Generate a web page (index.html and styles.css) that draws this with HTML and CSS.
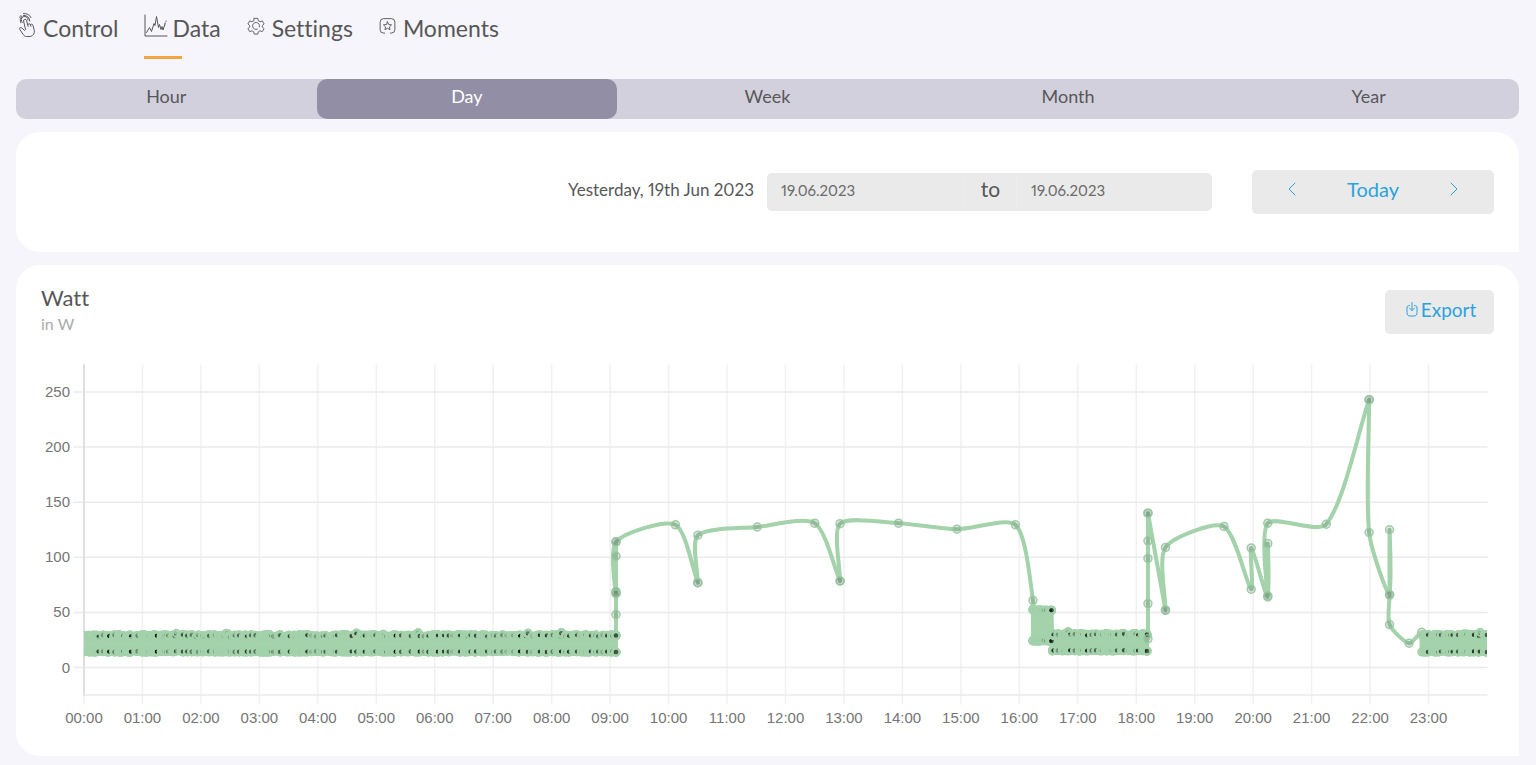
FILE: index.html
```html
<!DOCTYPE html>
<html lang="en">
<head>
  <meta charset="UTF-8" />
  <meta name="viewport" content="width=device-width, initial-scale=1.0"/>
  <title>Data</title>
  <link rel="stylesheet" href="styles.css">
</head>
<body>
  <nav class="nav">
    <a href="#control" class="nav-link">
      <svg class="icon icon-hand" viewBox="0 0 18 26">
        <path d="M7.500 17.500L5.600 9a1.500 1.500 0 0 1 2.900-.7l1.600 6M9.800 12.800c.4-1.700 2.300-1.400 2.700 0l.4 1.600M12.300 12.800c.8-1.200 2.300-.8 2.600.5l1.400 5c.6 3-1 5.500-4 6.200H8.500c-1.500 0-2.500-.8-3.500-2.300L1.800 17.500c-.8-1.700 1-2.600 2.200-1.400l2.500 2.400"/>
        <path d="M4.500 10.500a3.400 3.400 0 1 1 5.500-2.500M2.800 10.800a5.500 5.500 0 0 1 1-6.500M5.500 3.400a5.500 5.500 0 0 1 6.300 5.800M1.800 5.500a7 7 0 0 1 1-2M5.500 1.600a7.500 7.500 0 0 1 7.500 4"/>
      </svg>
      <span>Control</span>
    </a>
    <a href="#data" class="nav-link active">
      <svg class="icon icon-chart" viewBox="0 0 24 24">
        <path d="M1 1v21h22M2.500 18.500l3-5 2 4 2.500-8 1 2 1.500-9 2 11 1-3 1.500 5 1-3 1 3.500 2-6M21 9v1M22 7v.5"/>
      </svg>
      <span>Data</span>
    </a>
    <a href="#settings" class="nav-link">
      <svg class="icon icon-gear" viewBox="0 0 20 20">
        <path d="M8 1.500h4l.5 2.600 2 1.200 2.500-1 2 3.400-2 1.700v1.800l2 1.700-2 3.400-2.500-1-2 1.200-.5 2.500H8l-.5-2.500-2-1.200-2.500 1-2-3.400 2-1.700V9.400L1 7.700l2-3.400 2.500 1 2-1.200z"/>
        <path d="M11.500 13.600a3.900 3.900 0 1 1 2.300-2.400"/>
      </svg>
      <span>Settings</span>
    </a>
    <a href="#moments" class="nav-link">
      <svg class="icon icon-star" viewBox="0 0 18 18">
        <path d="M6 16.500H5A3.700 3.700 0 0 1 1.200 13V5A3.700 3.700 0 0 1 5 1.200h8A3.700 3.700 0 0 1 16.800 5v8a3.700 3.700 0 0 1-3.800 3.500h-1"/>
        <path d="M9 4.600l1.300 2.800 3 .4-2.200 2.100.6 3L9 11.400l-2.700 1.500.6-3-2.200-2.100 3-.4z"/>
      </svg>
      <span>Moments</span>
    </a>
  </nav>

  <main>
    <div class="tabs">
      <button class="tab">Hour</button>
      <button class="tab selected">Day</button>
      <button class="tab">Week</button>
      <button class="tab">Month</button>
      <button class="tab">Year</button>
    </div>

    <section class="card filter">
      <label class="range-label" for="from">Yesterday, 19th Jun 2023</label>
      <div class="range">
        <input class="date" id="from" type="text" value="19.06.2023">
        <label class="to" for="until">to</label>
        <input class="date" id="until" type="text" value="19.06.2023">
      </div>
      <div class="stepper">
        <button class="step" aria-label="Previous day">
          <svg class="chevron" viewBox="0 0 8 14"><path d="M7 1L1 7l6 6"/></svg>
        </button>
        <button class="today">Today</button>
        <button class="step" aria-label="Next day">
          <svg class="chevron" viewBox="0 0 8 14"><path d="M1 1l6 6-6 6"/></svg>
        </button>
      </div>
    </section>

    <section class="card panel">
      <div class="panel-head">
        <div>
          <h1>Watt</h1>
          <p class="unit">in W</p>
        </div>
        <button class="export">
          <svg class="icon-export" viewBox="0 0 12 15">
            <path d="M3.500 3.500C1.500 3.500 1 4.500 1 6v4.500C1 13 2 14 4 14h4c2 0 3-1 3-3.500V6c0-1.500-.5-2.500-2.500-2.500M6 .5v8M3.500 6L6 8.500 8.500 6"/>
          </svg>
          <span>Export</span>
        </button>
      </div>
      <svg class="chart" id="chart" viewBox="0 0 1453 371" role="img" aria-label="Watt per time of day">
        <defs>
          <clipPath id="area"><rect x="43" y="0" width="1403" height="340"/></clipPath>
        </defs>
        <g id="grid"></g>
        <g id="series" clip-path="url(#area)"></g>
      </svg>
    </section>
  </main>

  <script src="script.js"></script>
</body>
</html>
```
FILE: styles.css
```css
* {
  box-sizing: border-box;
}

body {
  margin: 0;
  background: #f6f5fb;
  color: #575757;
  font-family: Lato, sans-serif;
  font-variant-ligatures: none;
  font-variant-numeric: proportional-nums;
}

button,
input {
  font: inherit;
  border: none;
  margin: 0;
}

button {
  cursor: pointer;
}

svg {
  fill: none;
  stroke: currentColor;
  stroke-linecap: round;
  stroke-linejoin: round;
}

main {
  padding: 0 17px 9px 16px;
}

/* navigation */
.nav {
  display: flex;
  gap: 26px;
  height: 79px;
  padding: 12px 18px 0;
}

.nav-link {
  position: relative;
  display: flex;
  align-items: flex-start;
  gap: 7px;
  height: 47px;
  color: #575757;
  font-size: 23px;
  line-height: 32px;
  text-decoration: none;
}

.nav-link.active {
  gap: 4px;
}

.nav-link.active::after {
  content: "";
  position: absolute;
  left: 0;
  bottom: 0;
  width: 38px;
  height: 3px;
  background: #f2a541;
}

.icon {
  flex: none;
}

.icon-hand {
  width: 18px;
  height: 26px;
}

.icon-chart {
  width: 24px;
  height: 28px;
}

.icon-gear {
  width: 18px;
  height: 28px;
}

.icon-star {
  width: 17px;
  height: 28px;
}

/* period tabs */
.tabs {
  display: flex;
  border-radius: 10px;
  background: #d3d0de;
}

.tab {
  flex: 1;
  height: 40px;
  padding: 0 0 6px;
  border-radius: 10px;
  background: none;
  color: #575757;
  font-size: 18px;
}

.tab.selected {
  background: #928ea6;
  color: #fff;
}

/* cards */
.card {
  margin-top: 13px;
  padding: 25px;
  border-radius: 24px 24px 0 24px;
  background: #fff;
}

.filter {
  display: flex;
  justify-content: flex-end;
  align-items: center;
  height: 120px;
}

.range-label {
  margin-right: 13px;
  padding-bottom: 5px;
  font-size: 17px;
}

.range {
  display: flex;
  height: 38px;
  margin-right: 40px;
  border-radius: 5px;
  background: #eaeaea;
  overflow: hidden;
}

.date {
  width: 195px;
  padding: 0 14px 5px;
  background: none;
  color: #6b6b6b;
  font-size: 15px;
}

.date:first-child {
  width: 197px;
}

.to {
  width: 53px;
  border: solid #eee;
  border-width: 0 1px;
  font-size: 21px;
  line-height: 32px;
  text-align: center;
}

.stepper {
  display: flex;
  width: 242px;
  height: 44px;
  border-radius: 5px;
  background: #eaeaea;
  color: #2aa3dc;
}

.step,
.today {
  flex: 1;
  padding: 0 0 6px;
  background: none;
  color: inherit;
}

.today {
  font-size: 20px;
}

.chevron {
  width: 8px;
  height: 14px;
}

.panel-head {
  display: flex;
  justify-content: space-between;
  align-items: flex-start;
}

h1 {
  margin: 0 0 4px;
  font-size: 22px;
  font-weight: 400;
  line-height: 16px;
}

.unit {
  margin: 0;
  color: #aaa;
  font-size: 16px;
  line-height: 28px;
}

.export {
  display: flex;
  justify-content: center;
  align-items: center;
  gap: 3px;
  width: 109px;
  height: 44px;
  padding: 0 0 5px 3px;
  border-radius: 5px;
  background: #eaeaea;
  color: #2aa3dc;
  font-size: 19px;
}

.icon-export {
  width: 12px;
  height: 15px;
}

/* chart */
.chart {
  display: block;
  width: 100%;
  margin-top: 22px;
}

.grid-x {
  stroke: #f1f1f1;
  stroke-width: 1.5;
}

.grid-y {
  stroke: #ebebeb;
  stroke-width: 1.5;
}

.axis {
  stroke: #dfdfdf;
  stroke-width: 2;
}

.tick {
  fill: #757575;
  stroke: none;
  font-family: "Liberation Sans", sans-serif;
  font-size: 15px;
}

.line {
  stroke: #a3d2ab;
  stroke-width: 4;
}

.point {
  fill: rgba(0, 0, 0, 0.1);
  stroke: rgba(150, 200, 160, 0.9);
  stroke-width: 1.5;
}

.dense {
  fill: rgba(0, 0, 0, 0.1);
  stroke: #a3d2ab;
  stroke-width: 2;
}
```
FILE: script.js
```js
const LEFT = 43;
const RIGHT = 1446;
const TOP = 5;
const BOTTOM = 335;
const TENSION = 0.25;
const SVG = "http://www.w3.org/2000/svg";
const grid = document.getElementById("grid");
const series = document.getElementById("series");

const toX = minute => LEFT + (minute / 1440) * (RIGHT - LEFT);
const toY = watt => 307.5 - watt * 1.102;

function add(parent, name, attrs, text) {
  const el = document.createElementNS(SVG, name);
  for (const key in attrs) el.setAttribute(key, attrs[key]);
  if (text) el.textContent = text;
  parent.appendChild(el);
}

function drawGrid() {
  for (let h = 0; h < 24; h++) {
    const x = toX(h * 60);
    add(grid, "line", { x1: x, x2: x, y1: TOP, y2: 344, class: "grid-x" });
    add(grid, "text", { x: x, y: 363, "text-anchor": "middle", class: "tick" }, String(h).padStart(2, "0") + ":00");
  }
  for (let w = 0; w <= 250; w += 50) {
    const y = toY(w);
    add(grid, "line", { x1: 33, x2: RIGHT, y1: y, y2: y, class: "grid-y" });
    add(grid, "text", { x: 29, y: y + 5, "text-anchor": "end", class: "tick" }, String(w));
  }
  add(grid, "line", { x1: LEFT, x2: RIGHT, y1: BOTTOM, y2: BOTTOM, class: "grid-y" });
  add(grid, "line", { x1: LEFT, x2: LEFT, y1: TOP, y2: BOTTOM, class: "axis" });
}

// repeatable noise for the standby readings
let seed = 7;
function random() {
  seed = (seed * 16807) % 2147483647;
  return seed / 2147483647;
}

// load switching quickly between two levels
function toggling(from, to, low, high) {
  const rows = [];
  let minute = from;
  while (minute < to) {
    const repeat = random() < 0.5 ? 4 + Math.floor(random() * 6) : 1 + Math.floor(random() * 3);
    const peak = high + random() * 1.2 + (random() < 0.03 ? 2 : 0);
    for (let i = 0; i < repeat; i++) {
      rows.push([minute, low + random() * 0.8, true]);
      rows.push([minute, peak - random() * 1.5, true]);
    }
    minute += random() < 0.3 ? 4.5 : 0.8 + random() * 2;
  }
  for (let i = 0; i < 6; i++) {
    rows.push([to, low, true], [to, high, true]);
  }
  return rows;
}

const data = [
  ...toggling(0, 546, 14, 29),
  [546, 48], [546, 68], [546, 69], [546, 101], [546, 114], [546, 67], [546, 114],
  [607, 129.5], [630, 77], [630, 77], [630, 120], [691, 127.5], [750, 131],
  [776, 78.5], [776, 78.5], [776, 130.5], [836, 131], [896, 125.5], [956, 129.5],
  [974, 61],
  ...toggling(974, 993, 24, 52),
  ...toggling(994, 1091, 15, 30),
  [1092, 26], [1092, 58], [1092, 99], [1092, 115], [1092, 140], [1092, 140],
  [1110, 52], [1110, 52], [1110, 109], [1170, 128], [1198, 71], [1198, 108.5],
  [1215, 64], [1215, 112.5], [1215, 65], [1215, 131], [1275, 130],
  [1319, 243], [1319, 243], [1319, 122.5], [1340, 66], [1340, 125], [1340, 66],
  [1340, 39], [1360, 22], [1373, 32],
  ...toggling(1373, 1440, 14, 29.5)
];

function drawSeries() {
  const points = data.map(([minute, watt, dense]) => ({ x: toX(minute), y: toY(watt), dense }));

  // control points of a smoothed line
  const handles = points.map((p, i) => {
    const prev = points[i - 1] || p;
    const next = points[i + 1] || p;
    const before = Math.hypot(p.x - prev.x, p.y - prev.y);
    const after = Math.hypot(next.x - p.x, next.y - p.y);
    const total = before + after || 1;
    const a = TENSION * before / total;
    const b = TENSION * after / total;
    return {
      inX: p.x - a * (next.x - prev.x),
      inY: p.y - a * (next.y - prev.y),
      outX: p.x + b * (next.x - prev.x),
      outY: p.y + b * (next.y - prev.y)
    };
  });

  let d = `M${points[0].x} ${points[0].y}`;
  for (let i = 1; i < points.length; i++) {
    const from = handles[i - 1];
    const to = handles[i];
    d += `C${from.outX} ${from.outY} ${to.inX} ${to.inY} ${points[i].x} ${points[i].y}`;
  }
  add(series, "path", { d, class: "line" });

  points.forEach(p => {
    add(series, "circle", { cx: p.x, cy: p.y, r: p.dense ? 3.5 : 4, class: p.dense ? "dense" : "point" });
  });
}

drawGrid();
drawSeries();
```
